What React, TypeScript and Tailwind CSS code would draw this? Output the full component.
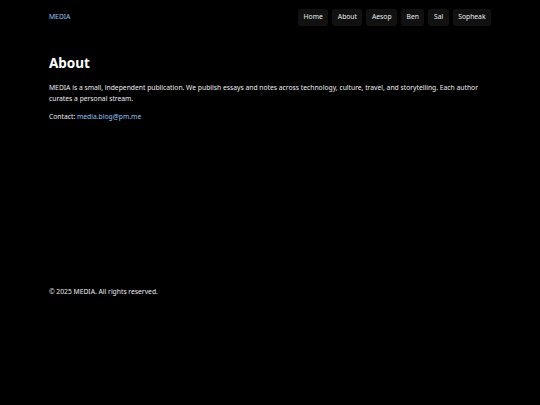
import React from 'react';

const authors = ['Home', 'About', 'Aesop', 'Ben', 'Sal', 'Sopheak'];

const NavLink: React.FC<{ label: string }> = ({ label }) => (
    <a href="#" className="px-[5.5px] h-[17px] flex items-center rounded-[3px] bg-[#111111] text-[#ececec] text-[6.75px]">
        {label}
    </a>
);

export default function App() {
    return (
        <div className="min-h-[405px] bg-black text-[#ececec] flex flex-col" style={{ fontFamily: '"Noto Sans", sans-serif' }}>
            <header className="px-[49px] h-[34px] flex items-center justify-between">
                <a href="#" className="text-[6.75px] text-[#8fc3f0]">MEDIA</a>
                <nav className="flex items-center gap-[4px]">
                    {authors.map(name => <NavLink key={name} label={name} />)}
                </nav>
            </header>
            <main className="px-[49px] pt-[19px] h-[245px]">
                <h1 className="text-[13.5px] font-bold text-white leading-[20px]">About</h1>
                <p className="mt-[9px] text-[6.75px] leading-[11px]">
                    MEDIA is a small, independent publication. We publish essays and notes across technology, culture, travel, and storytelling. Each author curates a personal stream.
                </p>
                <p className="mt-[7px] text-[6.75px] leading-[11px]">
                    Contact: <a href="#" className="text-[#8fc3f0]">media.blog@pm.me</a>
                </p>
            </main>
            <footer className="px-[49px] pt-[7px]">
                <p className="text-[6.75px] leading-[11px]">© 2025 MEDIA. All rights reserved.</p>
            </footer>
        </div>
    );
}
